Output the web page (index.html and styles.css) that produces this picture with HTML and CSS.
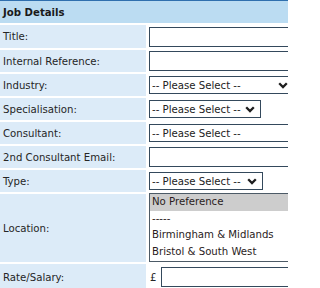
FILE: index.html
```html
<!DOCTYPE html>
<html>
<head>
<meta charset="utf-8">
<link rel="stylesheet" href="styles.css">
</head>
<body>
<div class="panel">
  <div class="head">Job Details</div>
  <div class="form">
    <div class="lbl">Title:</div>
    <div class="val"><input class="txt" type="text"></div>

    <div class="lbl">Internal Reference:</div>
    <div class="val"><input class="txt" type="text"></div>

    <div class="lbl">Industry:</div>
    <div class="val"><select class="sel w-ind"><option>-- Please Select --</option></select></div>

    <div class="lbl">Specialisation:</div>
    <div class="val"><select class="sel w-spec"><option>-- Please Select --</option></select></div>

    <div class="lbl">Consultant:</div>
    <div class="val"><select class="sel w-wide"><option>-- Please Select --</option></select></div>

    <div class="lbl">2nd Consultant Email:</div>
    <div class="val"><input class="txt" type="text"></div>

    <div class="lbl">Type:</div>
    <div class="val"><select class="sel w-type"><option>-- Please Select --</option></select></div>

    <div class="lbl">Location:</div>
    <div class="val top">
      <div class="listbox">
        <div class="opt on">No Preference</div>
        <div class="opt">-----</div>
        <div class="opt">Birmingham &amp; Midlands</div>
        <div class="opt">Bristol &amp; South West</div>
      </div>
    </div>

    <div class="lbl">Rate/Salary:</div>
    <div class="val"><span class="cur">£</span><input class="txt rate-in" type="text"></div>
  </div>
</div>
</body>
</html>
```

FILE: styles.css
```css
html, body {
  margin: 0;
  padding: 0;
  background: #ffffff;
  overflow: hidden;
}
body {
  width: 288px;
  height: 288px;
  font-family: "DejaVu Sans Condensed", "DejaVu Sans", sans-serif;
  font-size: 11.3px;
  color: #262626;
}
.panel {
  width: 288px;
  overflow: hidden;
}
.head {
  box-sizing: border-box;
  height: 23px;
  border-top: 1px solid #2f6fae;
  background: #bbdcf2;
  font-weight: bold;
  color: #1a1a1a;
  padding-left: 3px;
  display: flex;
  align-items: center;
  margin-bottom: 2px;
}
.form {
  display: grid;
  grid-template-columns: 146px 140px;
  grid-template-rows: 23px repeat(6, 22px) 68px 26px;
  column-gap: 2px;
  row-gap: 2px;
}
.lbl {
  background: #dcebf8;
  padding-left: 3px;
  display: flex;
  align-items: center;
  white-space: nowrap;
}
.val {
  background: #ffffff;
  padding-left: 1px;
  display: flex;
  align-items: center;
  min-width: 0;
}
.top { align-items: flex-start; }
.txt {
  box-sizing: border-box;
  flex: none;
  width: 170px;
  height: 20px;
  margin: 0;
  border: 1px solid #34495c;
  background: #ffffff;
  padding: 0 3px;
  font: inherit;
}
.sel {
  box-sizing: border-box;
  flex: none;
  -webkit-appearance: none;
  appearance: none;
  height: 18px;
  margin: 0;
  border: 1px solid #34495c;
  border-radius: 0;
  background: #ffffff url("data:image/svg+xml,%3Csvg xmlns='http://www.w3.org/2000/svg' width='10' height='7' viewBox='0 0 10 7'%3E%3Cpath d='M1.2 1.3l3.8 3.8 3.8-3.8' fill='none' stroke='%231e1e1e' stroke-width='2.3'/%3E%3C/svg%3E") no-repeat right 5px center;
  padding: 0 16px 0 2px;
  font: inherit;
  color: #222222;
}
.w-ind { width: 145px; }
.w-spec { width: 112px; }
.w-type { width: 114px; }
.w-wide { width: 170px; }
.listbox {
  box-sizing: border-box;
  flex: none;
  width: 170px;
  height: 69px;
  margin-top: -1px;
  border: 1px solid #4c5a66;
  background: #ffffff;
}
.opt {
  height: 16.5px;
  line-height: 16.5px;
  padding-left: 2px;
  white-space: nowrap;
  color: #2a1c1c;
}
.opt.on {
  background: #cdcdcd;
}
.cur {
  flex: none;
  width: 11px;
  padding-left: 1px;
}
.rate-in {
  width: 150px;
}
```
